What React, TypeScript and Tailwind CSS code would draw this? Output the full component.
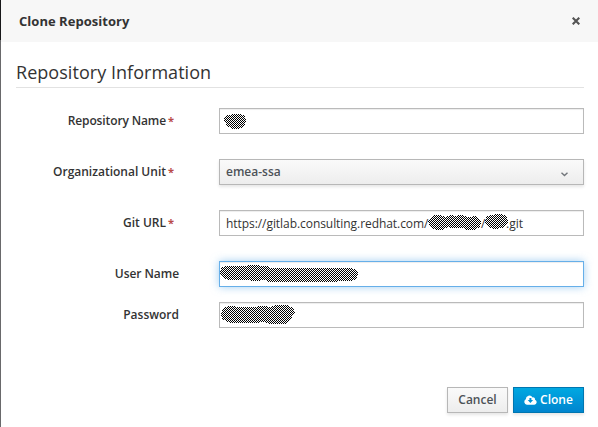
import type { ReactNode } from 'react';

type RowProps = { label: string; required?: boolean; className: string; children: ReactNode };

function Row({ label, required, className, children }: RowProps) {
  return (
    <div className={`flex h-[26px] ${className}`}>
      <label className="flex w-[163px] shrink-0 justify-end text-[12px] leading-[25px] font-semibold whitespace-nowrap text-[#333]">
        {label}
        {required && <span className="mr-[5px] ml-[2px] w-[6px] text-[11px] font-bold tracking-normal text-[#b94a48]">*</span>}
      </label>
      <div className="ml-10 flex w-[365px] shrink-0">{children}</div>
    </div>
  );
}

const field = 'flex h-[26px] w-full items-center border border-[#bababa] bg-white shadow-[inset_0_1px_1px_rgba(3,3,3,0.075)]';

type ScribbleProps = { id: string; width: number; height: number; d: string; className?: string };

// Checkered marker stroke that hides private values
function Scribble({ id, width, height, d, className = '' }: ScribbleProps) {
  return (
    <svg width={width} height={height} className={`block shrink-0 ${className}`} shapeRendering="crispEdges">
      <defs>
        <pattern id={id} width="2" height="2" patternUnits="userSpaceOnUse">
          <rect width="1" height="1" fill="#000" />
          <rect x="1" y="1" width="1" height="1" fill="#000" />
        </pattern>
      </defs>
      <path d={d} fill={`url(#${id})`} />
    </svg>
  );
}

export default function App() {
  return (
    <div className="flex h-[427px] w-[598px] overflow-hidden bg-white font-['Open_Sans',sans-serif] text-[12px] text-[#333]">
      <div className="flex w-px shrink-0 flex-col">
        <div className="h-10 bg-[#171719]" />
        <div className="flex-1 bg-[#69696b]" />
      </div>
      <div className="flex w-[597px] flex-col">
        <header className="flex h-[42px] shrink-0 items-center justify-between bg-[#f7f7f7] pr-[18px] pl-[18px]">
          <h1 className="text-[13px] leading-[20px] font-bold tracking-[0.03px]">Clone Repository</h1>
          <button aria-label="Close" className="h-2 w-2">
            <svg width="8" height="8" viewBox="0 0 8 8" stroke="#545454" strokeWidth="2.1">
              <path d="M.7.7 7.3 7.3M7.3.7.7 7.3" />
            </svg>
          </button>
        </header>
        <main className="flex flex-1 flex-col pl-[15px]">
          <h2 className="mb-5 h-[46px] w-[568px] border-b border-[#e2e2e2] pt-[18px] text-[18px] leading-[25px] font-normal tracking-[0.04px]">
            Repository Information
          </h2>
          <Row label="Repository Name" required className="tracking-[-0.12px]">
            <div className={field}>
              <Scribble
                id="name"
                width={24}
                height={17}
                className="ml-[3px]"
                d="M1 7Q1 3 6 2Q12 0 18 1Q23 3 23 8L22 13Q17 17 10 16Q3 14 1 7Z"
              />
            </div>
          </Row>
          <Row label="Organizational Unit" required className="mt-[25px]">
            <button className="flex h-[26px] w-full items-center justify-between border border-[#b7b7b7] bg-linear-to-b from-[#fafafa] to-[#ededed] pr-[15px] pb-px pl-[6px] font-semibold text-[#4d5258] shadow-[0_2px_3px_rgba(3,3,3,0.1)]">
              emea-ssa
              <svg width="7" height="5" viewBox="0 0 7 5" className="mt-[6px]" fill="none" stroke="#72767b" strokeWidth="1.4">
                <path d="m.5.8 3 2.8 3-2.8" />
              </svg>
            </button>
          </Row>
          <Row label="Git URL" required className="mt-[25px]">
            <div className={`${field} pl-[6px]`}>
              <span className="w-[202px] pt-px tracking-[-0.06px] whitespace-nowrap">https://gitlab.consulting.redhat.com/</span>
              <Scribble
                id="group"
                width={55}
                height={17}
                className="-mt-px -ml-px"
                d="M1 8Q3 1 10 1Q14 0 18 3Q24 0 29 2Q36 0 41 3L48 2Q55 4 54 10Q52 16 44 16Q39 16 36 14Q28 15 21 13Q16 17 10 16Q3 14 1 8Z"
              />
              <span className="-ml-px w-[4px] pt-px">/</span>
              <Scribble
                id="project"
                width={24}
                height={17}
                className="-mt-[3px] -ml-px"
                d="M1 8Q1 3 7 2L15 1Q23 1 24 8Q23 14 17 15Q11 17 6 15Q1 13 1 8Z"
              />
              <span className="-ml-[2px] pt-px">.git</span>
            </div>
          </Row>
          <Row label="User Name" className="mt-[25px] tracking-[-0.06px]">
            <div className="flex h-[26px] w-full items-start border border-[#66afe9] bg-white pt-[3px] shadow-[inset_0_1px_1px_rgba(3,3,3,0.075),0_0_8px_rgba(102,175,233,0.6)]">
              <Scribble
                id="user"
                width={139}
                height={18}
                d="M0 8Q0 2 6 1Q15 0 24 1Q34 -1 43 1Q48 1 51 3L131 3Q138 4 138 10Q137 16 130 16Q87 18 51 17Q47 17 45 15L34 16Q21 14 9 15Q1 14 0 8Z"
              />
            </div>
          </Row>
          <Row label="Password" className="mt-[15px]">
            <div className={`${field} pl-px`}>
              <Scribble
                id="password"
                width={75}
                height={20}
                d="M0 9Q1 2 8 1L20 2Q30 3 39 1Q43 0 48 2Q54 0 60 0Q71-1 74 7Q73 10 71 12Q69 19 61 19Q53 20 46 18Q41 16 37 18Q27 17 17 18Q8 19 3 15Q0 13 0 9Z"
              />
            </div>
          </Row>
          <footer className="mt-[59px] flex w-[568px] justify-end gap-[5px]">
            <button className="h-[26px] w-[61px] border border-[#b7b7b7] bg-linear-to-b from-[#fafafa] to-[#ededed] pb-px leading-[22px] font-semibold text-[#4d5258] shadow-[0_2px_3px_rgba(3,3,3,0.1)]">
              Cancel
            </button>
            <button className="flex h-[26px] w-[71px] items-center justify-center gap-[3px] border border-[#0076b0] bg-linear-to-b from-[#00a8e1] to-[#0085cf] pb-px font-semibold text-white shadow-[0_2px_3px_rgba(3,3,3,0.1)]">
              <svg width="13" height="10" viewBox="0 0 13 10">
                <path
                  fill="white"
                  d="M2.9 9.7A2.9 2.9 0 0 1 1.8 4.3 3.6 3.6 0 0 1 8.5 2.4 2 2 0 0 1 11 4.7 2.6 2.6 0 0 1 10.4 9.7Z"
                />
                <path fill="#0093d7" d="M5.4 3h2v2.1h1.7L6.4 8 3.7 5.1h1.7Z" />
              </svg>
              Clone
            </button>
          </footer>
        </main>
      </div>
    </div>
  );
}
